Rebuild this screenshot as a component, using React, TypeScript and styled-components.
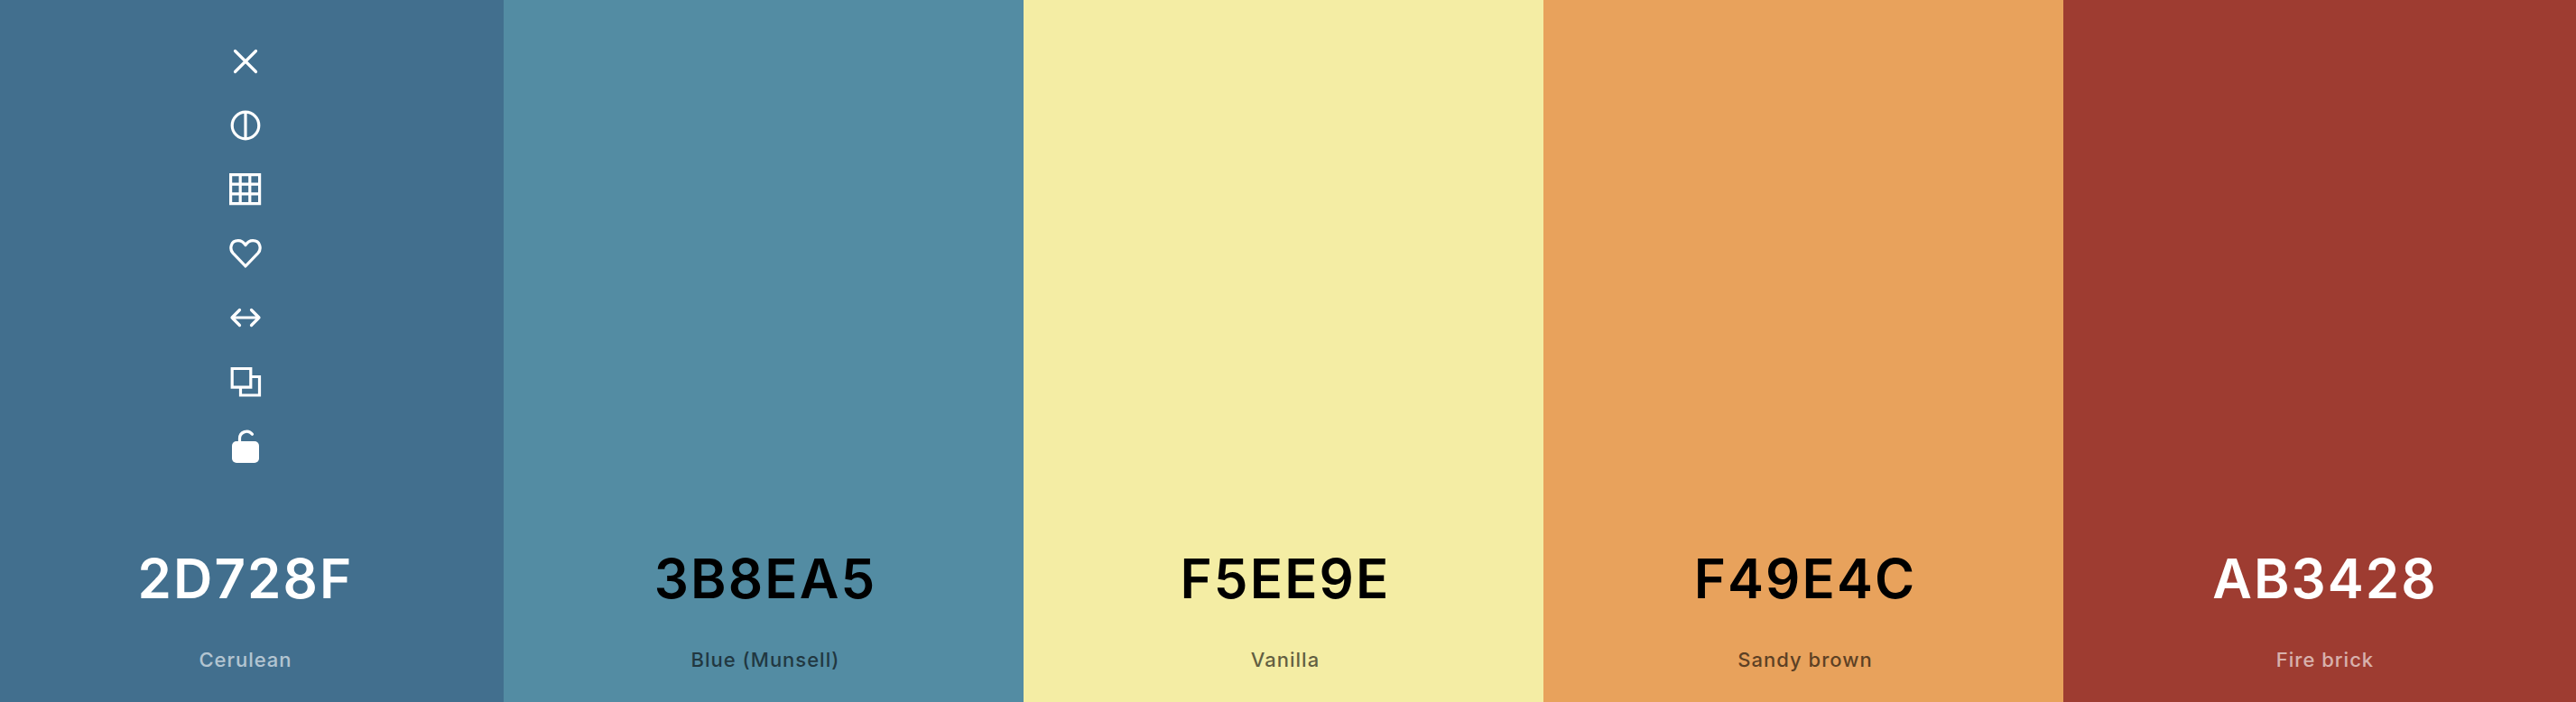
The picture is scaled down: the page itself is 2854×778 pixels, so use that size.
import React from 'react';
import styled, { createGlobalStyle } from 'styled-components';

const GlobalStyle = createGlobalStyle`
    html, body {
        margin: 0;
        padding: 0;
        height: 778px;
        overflow: hidden;
        font-family: Inter, "Noto Sans", sans-serif;
    }
`;

const Palette = styled.div`
    display: grid;
    grid-template-columns: repeat(5, 576px);
    width: 2880px;
    height: 778px;
    margin-left: -18px;
`;

const Swatch = styled.div<{ $bg: string; $fg: string }>`
    display: flex;
    flex-direction: column;
    align-items: center;
    padding-left: 4px;
    background: ${props => props.$bg};
    color: ${props => props.$fg};
`;

const Tools = styled.div`
    flex: 1;
    display: flex;
    flex-direction: column;
    align-items: center;
    gap: 35px;
    padding-top: 50px;
`;

const ToolIcon = styled.svg`
    display: block;
    width: 36px;
    height: 36px;
    overflow: visible;
    fill: none;
    stroke: #fff;
    stroke-width: 3.2;
`;

const Hex = styled.div`
    font-size: 60px;
    line-height: 72px;
    font-weight: 600;
    letter-spacing: 2.1px;
`;

const Name = styled.div`
    margin-top: 40px;
    margin-bottom: 33px;
    font-size: 22px;
    line-height: 28px;
    font-weight: 500;
    letter-spacing: 1px;
    opacity: 0.6;
`;

const colors = [
    { hex: '2D728F', name: 'Cerulean', bg: '#426F8E', fg: '#fff' },
    { hex: '3B8EA5', name: 'Blue (Munsell)', bg: '#538CA3', fg: '#000' },
    { hex: 'F5EE9E', name: 'Vanilla', bg: '#F4EDA4', fg: '#000' },
    { hex: 'F49E4C', name: 'Sandy brown', bg: '#E8A25C', fg: '#000' },
    { hex: 'AB3428', name: 'Fire brick', bg: '#9E3C31', fg: '#fff' },
];

function ToolList() {
    return (
        <Tools>
            <ToolIcon viewBox="0 0 36 36">
                <path d="M6.5 6.5l23 23M29.5 6.5l-23 23" strokeLinecap="round" />
            </ToolIcon>
            <ToolIcon viewBox="0 0 36 36">
                <circle cx="18" cy="18" r="14.8" />
                <path d="M18 3.2v29.6" />
            </ToolIcon>
            <ToolIcon viewBox="0 0 36 36">
                <path d="M1.6 1.6h32v32h-32zM12.2 1.600v32M22.800 1.600v32M1.600 12.200h32M1.600 22.800h32" />
            </ToolIcon>
            <ToolIcon viewBox="0 0 36 36">
                <path
                    d="M18 32L4.200 17.600C0 13 1.500 3.700 9.800 3.700c3.600 0 6.300 2 8.200 5 1.900-3 4.600-5 8.200-5 8.300 0 9.800 9.300 5.600 13.900z"
                    strokeLinejoin="round"
                />
            </ToolIcon>
            <ToolIcon viewBox="0 0 36 36">
                <path
                    d="M3 18h30M11.500 9.500L3 18l8.500 8.500M24.500 9.500L33 18l-8.500 8.500"
                    strokeLinecap="round"
                    strokeLinejoin="round"
                />
            </ToolIcon>
            <ToolIcon viewBox="0 0 36 36">
                <path d="M3.200 3.500h20.600v20.600H3.200zM23.800 12.500h9.700V33h-21v-9" />
            </ToolIcon>
            <ToolIcon viewBox="0 0 36 36">
                <path d="M11.500 13v-3a7.800 7.800 0 0 1 14-4.700" strokeLinecap="round" />
                <rect x="3" y="13" width="30" height="24" rx="5" fill="#fff" stroke="none" />
            </ToolIcon>
        </Tools>
    );
}

export default function App() {
    return (
        <>
            <GlobalStyle />
            <Palette>
                {colors.map((color, index) => (
                    <Swatch key={color.hex} $bg={color.bg} $fg={color.fg}>
                        {index === 0 ? <ToolList /> : <Tools />}
                        <Hex>{color.hex}</Hex>
                        <Name>{color.name}</Name>
                    </Swatch>
                ))}
            </Palette>
        </>
    );
}
